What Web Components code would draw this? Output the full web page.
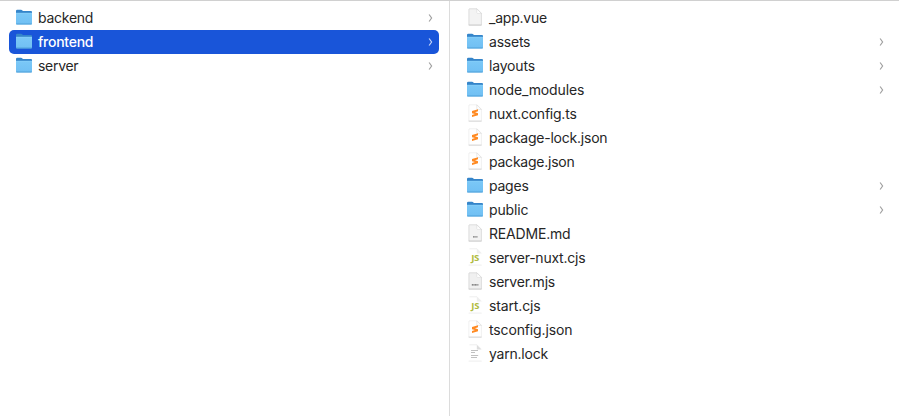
<!DOCTYPE html>
<html lang="en"><head><meta charset="utf-8"><title>Files</title>
<style>html,body{margin:0;height:100%;overflow:hidden;background:#fff}</style></head><body>
<column-browser>
<file-column>
<file-row kind="folder" branch style="--track:-.25px">backend</file-row>
<file-row kind="folder" branch selected style="--track:-.25px">frontend</file-row>
<file-row kind="folder" branch style="--track:-.3px">server</file-row>
</file-column>
<file-column>
<file-row kind="blank">_app.vue</file-row>
<file-row kind="folder" branch>assets</file-row>
<file-row kind="folder" branch style="--track:-.18px">layouts</file-row>
<file-row kind="folder" branch style="--track:-.12px">node_modules</file-row>
<file-row kind="sublime">nuxt.config.ts</file-row>
<file-row kind="sublime">package-lock.json</file-row>
<file-row kind="sublime">package.json</file-row>
<file-row kind="folder" branch>pages</file-row>
<file-row kind="folder" branch style="--track:-.15px">public</file-row>
<file-row kind="md" style="--track:-.18px">README.md</file-row>
<file-row kind="js">server-nuxt.cjs</file-row>
<file-row kind="mjs">server.mjs</file-row>
<file-row kind="js" style="--track:-.14px">start.cjs</file-row>
<file-row kind="sublime" style="--track:-.14px">tsconfig.json</file-row>
<file-row kind="text">yarn.lock</file-row>
</file-column>
</column-browser>
<script>
const page = (fill, edge) => `<path d="M3.5 .8H11L15.4 5.3V17H2.9V1.4Q2.9.8 3.5.8Z" fill="${fill}" stroke="${edge}" stroke-width=".6"/><path d="M10.8.9V4.8Q10.8 5.4 11.4 5.4H15.3Z" fill="#fff" stroke="#d4d4d4" stroke-width=".5"/><path d="M2.6 17.2H15.6" stroke="#c4c4c4" stroke-width=".6"/>`;
const ICONS = {
folder: `<defs><linearGradient id="g" x2="0" y2="1"><stop stop-color="#7bc8f7"/><stop offset="1" stop-color="#70bff3"/></linearGradient></defs><path d="M1 3Q1 1.8 2.2 1.8H6Q6.8 1.8 7.4 2.4L8 3H16Q17 3 17 4V8H1Z" fill="#3585ca"/><path d="M1 5H17V15.6Q17 16.4 16.2 16.4H1.8Q1 16.4 1 15.6Z" fill="url(#g)"/><path d="M1 5.2H17" stroke="#8fd3fb" stroke-width=".6"/><path d="M1.2 16H16.8" stroke="#4598d2" stroke-width=".8"/>`,
blank: page('#f3f3f3','#c9c9c9'),
sublime: page('#fff','#e5e5e5') + `<path d="M12 5.2V7.2L9 8.3 12 9.2V11.3L6 13V11L9 10 6 9.2V6.9Z" fill="#ff8a22"/>`,
md: page('#f3f3f3','#c9c9c9') + `<path d="M7 12.9H11.5" stroke="#777" stroke-width="1.1" stroke-dasharray="1 .25"/>`,
mjs: page('#f0f0f0','#c9c9c9') + `<path d="M5.8 12.9H12.4" stroke="#666" stroke-width="1.3" stroke-dasharray="1.2 .3"/>`,
js: `<path d="M3.5.8H11L15.4 5.3M2.6 17.1H15.6" fill="none" stroke="#e2e2e2" stroke-width=".6"/><path d="M10.8.9V5.4H15.3Z" fill="#eee"/><text x="5.2" y="12.6" font-family="Open Sans,sans-serif" font-size="8" font-weight="700" fill="#b0bb40" textLength="8" lengthAdjust="spacingAndGlyphs">JS</text>`,
text: `<path d="M3.5.8H11L15.4 5.3M2.6 17.1H15.6" fill="none" stroke="#e2e2e2" stroke-width=".6"/><path d="M10.8.9V5.4H15.3Z" fill="#ddd"/><path d="M5 6.5H12M5 8.5H9M5 11.5H12.2M5 13.5H11" stroke="#bababa" stroke-width=".9"/>`
};
customElements.define('file-icon', class extends HTMLElement{
 connectedCallback(){this.attachShadow({mode:'open'}).innerHTML=`<style>:host{display:block;width:18px;height:18px;margin-bottom:2px}svg{display:block}</style><svg width="18" height="18" viewBox="0 0 18 18">${ICONS[this.getAttribute('kind')]}</svg>`}
});
customElements.define('file-row', class extends HTMLElement{
 connectedCallback(){
  this.attachShadow({mode:'open'}).innerHTML=`<style>
:host{display:flex;align-items:center;box-sizing:border-box;height:24px;padding:0 6px;border-radius:5px;color:#262626;font:14px/24px Inter,sans-serif;letter-spacing:var(--track,-.23px)}
:host([selected]){background:#1955d9;color:#fff;font-weight:500}
.name{flex:1;margin-left:5px;white-space:nowrap}
.chev{width:5px;height:8px;color:#a0a0a0}
:host([selected]) .chev{color:#c5d4f8}</style>
<file-icon kind="${this.getAttribute('kind')}"></file-icon><span class="name"><slot></slot></span>
${this.hasAttribute('branch')?'<svg class="chev" viewBox="0 0 5 8"><path d="M1.1 .5 L3.6 4 1.1 7.5" fill="none" stroke="currentColor" stroke-width="1.2"/></svg>':''}`}
});
customElements.define('file-column', class extends HTMLElement{
 connectedCallback(){this.attachShadow({mode:'open'}).innerHTML=`<style>:host{display:block;box-sizing:border-box;padding:5px 10px 0}:host(:first-child){padding-left:9px;border-right:1px solid #dcdcdc}</style><slot></slot>`}
});
customElements.define('column-browser', class extends HTMLElement{
 connectedCallback(){this.attachShadow({mode:'open'}).innerHTML=`<style>:host{display:grid;grid-template-columns:450px 450px;box-sizing:border-box;height:416px;border-top:1px solid #d0d0d0;background:#fff}</style><slot></slot>`}
});
</script></body></html>
